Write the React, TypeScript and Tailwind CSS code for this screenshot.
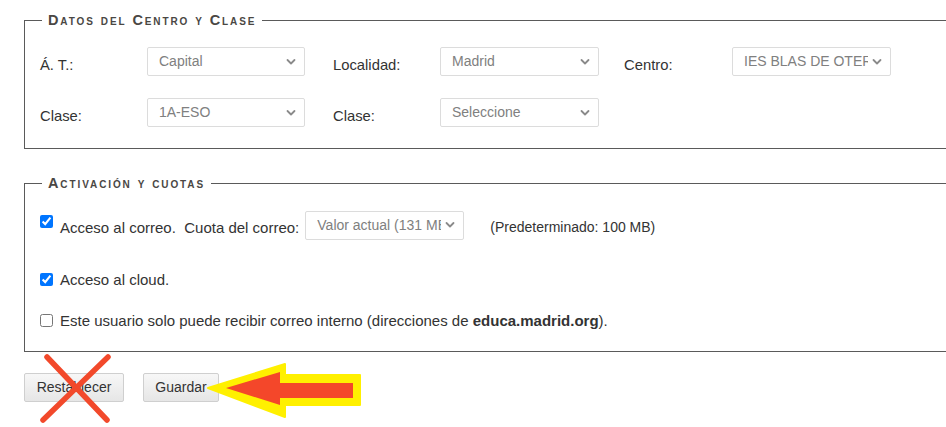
import React from "react";

function Chevron() {
  return (
    <svg
      className="pointer-events-none absolute right-[9px] top-1/2 -translate-y-1/2"
      width="10"
      height="7"
      viewBox="0 0 10 7"
      fill="none"
    >
      <path d="M1.5 1.5 L5 5 L8.5 1.5" stroke="#8a8a8a" strokeWidth="1.8" strokeLinecap="round" strokeLinejoin="round" />
    </svg>
  );
}

function Select({ value, width }: { value: string; width: string }) {
  return (
    <div className={`relative ${width} h-[29px] shrink-0`}>
      <select
        defaultValue={value}
        className="h-full w-full appearance-none rounded-[2px] border border-[#dcdcdc] bg-white pl-[11px] pr-[22px] text-[14px] text-[#808080] outline-none"
      >
        <option>{value}</option>
      </select>
      <Chevron />
    </div>
  );
}

function Legend({ children }: { children: React.ReactNode }) {
  return (
    <legend className="ml-[2px] px-[6px] text-[14.5px] leading-[14px] font-bold tracking-[1.9px] text-[#4a4744] [font-variant:small-caps]">
      {children}
    </legend>
  );
}

export default function App() {
  return (
    <div className="relative h-[427px] w-[946px] overflow-hidden bg-white pt-[13px] font-['Liberation_Sans',Arial,sans-serif] text-[#333]">
      {/* Datos del centro */}
      <fieldset className="ml-[24px] w-[940px] border border-[#5a5a5a] pt-[20px] pb-[21px] pl-[15px]">
        <Legend>Datos del Centro y Clase</Legend>
        <div className="flex flex-col gap-[22px] text-[14.8px]">
          <div className="flex items-center">
            <span className="w-[107px] pt-[7px]">Á. T.:</span>
            <Select value="Capital" width="w-[158px]" />
            <span className="ml-[28px] w-[107px] pt-[7px]">Localidad:</span>
            <Select value="Madrid" width="w-[159px]" />
            <span className="ml-[25px] w-[108px] pt-[7px]">Centro:</span>
            <Select value="IES BLAS DE OTERO" width="w-[159px]" />
          </div>
          <div className="flex items-center">
            <span className="w-[107px] pt-[7px]">Clase:</span>
            <Select value="1A-ESO" width="w-[158px]" />
            <span className="ml-[28px] w-[107px] pt-[7px]">Clase:</span>
            <Select value="Seleccione" width="w-[159px]" />
          </div>
        </div>
      </fieldset>

      {/* Activación y cuotas */}
      <fieldset className="mt-[27px] ml-[24px] w-[940px] border border-[#5a5a5a] pt-[20px] pb-[20px] pl-[15px]">
        <Legend>Activación y cuotas</Legend>
        <div className="flex flex-col text-[15px]">
          <div className="flex items-start">
            <input type="checkbox" defaultChecked className="mt-[5px] h-[13px] w-[13px] accent-[#0075ff]" />
            <div className="ml-[7px] flex items-center">
              <span className="pt-[7px]">Acceso al correo.&nbsp; Cuota del correo:</span>
              <div className="ml-[6px]">
                <Select value="Valor actual (131 MB)" width="w-[159px]" />
              </div>
              <span className="ml-[26px] pt-[5px] text-[14px]">(Predeterminado: 100 MB)</span>
            </div>
          </div>
          <label className="mt-[30px] flex h-[20px] items-center">
            <input type="checkbox" defaultChecked className="h-[13px] w-[13px] accent-[#0075ff]" />
            <span className="ml-[7px]">Acceso al cloud.</span>
          </label>
          <label className="mt-[21px] flex h-[20px] items-center">
            <input type="checkbox" className="h-[13px] w-[13px] accent-[#0075ff]" />
            <span className="ml-[7px]">
              Este usuario solo puede recibir correo interno (direcciones de <b>educa.madrid.org</b>).
            </span>
          </label>
        </div>
      </fieldset>

      {/* Botones */}
      <div className="mt-[21px] ml-[24px] flex gap-[19px] text-[14px]">
        <button className="h-[29px] w-[100px] rounded-[2px] border border-[#cfcfcf] bg-gradient-to-b from-[#f7f7f7] to-[#e6e6e6] text-[#333]">
          Restablecer
        </button>
        <button className="h-[29px] w-[76px] rounded-[2px] border border-[#cfcfcf] bg-gradient-to-b from-[#f7f7f7] to-[#e6e6e6] text-[#333]">
          Guardar
        </button>
      </div>

      {/* Anotaciones */}
      <svg className="pointer-events-none absolute left-0 top-0" width="946" height="427">
        <line x1="47" y1="357" x2="107" y2="420" stroke="#f2492b" strokeWidth="5.5" strokeLinecap="round" />
        <line x1="108" y1="357" x2="43" y2="420" stroke="#f2492b" strokeWidth="5.5" strokeLinecap="round" />
        <polygon
          points="208,388 285,364 285,375 360,375 360,405 285,405 285,417"
          fill="#fff000"
          stroke="#fff000"
          strokeWidth="2"
          strokeLinejoin="round"
        />
        <polygon points="226,388 280,372 280,383 353,383 353,398 280,398 280,405" fill="#f4472a" />
      </svg>
    </div>
  );
}
